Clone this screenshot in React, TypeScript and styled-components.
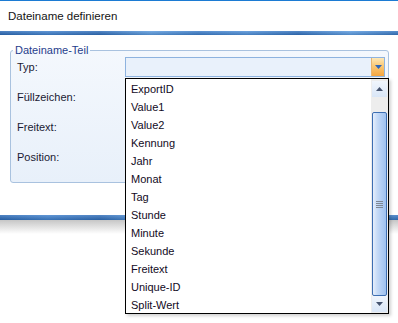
import * as React from 'react';
import styled, { createGlobalStyle } from 'styled-components';

const GlobalStyle = createGlobalStyle`
    html, body {
        margin: 0;
        padding: 0;
        background: #fff;
    }
    body {
        font-family: "Liberation Sans", Arial, sans-serif;
        font-size: 11px;
        color: #1a1a2e;
    }
`

const Window = styled.div`
    width: 398px;
    height: 323px;
    display: flex;
    flex-direction: column;
    background: #fff;
    overflow: hidden;
    border-top: 1px solid #1c7bd3;
    box-sizing: border-box;
`

const TitleBar = styled.div`
    height: 30px;
    flex-shrink: 0;
    display: flex;
    align-items: center;
    padding-left: 8px;
    font-size: 11.5px;
    color: #151515;
`

const Band = styled.div<{ $h: number }>`
    height: ${p => p.$h}px;
    flex-shrink: 0;
    background:
        linear-gradient(180deg, rgba(255, 255, 255, 0.18), rgba(0, 0, 0, 0.12)),
        linear-gradient(90deg, #2a69b6 0%, #3f80cc 12%, #2e6cb8 25%, #5a9ade 38%,
            #3a7bc8 50%, #4e8fd8 62%, #2f6fbc 75%, #5b9be0 88%, #3474c0 100%);
`

const Shadow = styled.div`
    height: 14px;
    flex-shrink: 0;
    background: linear-gradient(180deg, #c6c6c6, #ffffff);
`

const Body = styled.div`
    padding: 9px 9px 0 10px;
    flex-shrink: 0;
`

const Spacer = styled.div`
    height: 32px;
    flex-shrink: 0;
`

const GroupBox = styled.fieldset`
    margin: 0;
    padding: 0;
    border: 1px solid #a9c2df;
    border-radius: 3px;
    background: linear-gradient(180deg, #f4f8fd, #e8f0fa);
    min-width: 0;
`

const Caption = styled.legend`
    margin-left: 2px;
    padding: 0 2px;
    line-height: 13px;
    font-size: 11px;
    color: #1f3d8c;
`

const Grid = styled.div`
    display: grid;
    grid-template-columns: 108px 1fr;
    grid-auto-rows: 20px;
    row-gap: 10px;
    padding: 0 3px 15px 6px;
`

const Label = styled.div`
    display: flex;
    align-items: center;
    color: #1a1a33;
`

const ComboWrap = styled.div`
    position: relative;
`

const Combo = styled.div`
    height: 20px;
    box-sizing: border-box;
    border: 1px solid #8eb3df;
    background: #e9f1fb;
    display: flex;
    justify-content: flex-end;
`

const DropButton = styled.div`
    width: 12px;
    display: flex;
    align-items: center;
    justify-content: center;
    background: linear-gradient(180deg, #fde8b8 0%, #fac874 45%, #f4a540 100%);
    border-left: 1px solid #e7b56f;
`

const DropList = styled.div`
    position: absolute;
    top: 21px;
    left: 0;
    width: 264px;
    height: 236px;
    box-sizing: border-box;
    border: 1px solid #000;
    background: #fff;
    display: flex;
    box-shadow: 2px 2px 3px rgba(0, 0, 0, 0.18);
    z-index: 2;
`

const Items = styled.div`
    flex: 1;
    padding-top: 1px;
`

const Item = styled.div`
    height: 18px;
    line-height: 18px;
    padding-left: 5px;
    color: #120a24;
    white-space: nowrap;
`

const ScrollBar = styled.div`
    width: 17px;
    box-sizing: border-box;
    padding: 2px 1px 1px 1px;
    background: #ededed;
    display: flex;
    flex-direction: column;
`

const ScrollButton = styled.div`
    height: 16px;
    flex-shrink: 0;
    display: flex;
    align-items: center;
    justify-content: center;
    background: linear-gradient(180deg, #f0f5fc, #d9e6f7);
`

const Track = styled.div`
    flex: 1;
    display: flex;
    flex-direction: column;
    padding-top: 15px;
`

const Thumb = styled.div`
    flex: 1;
    border: 1px solid #3d6eb2;
    border-radius: 2px;
    background: linear-gradient(90deg, #e6effc 0%, #c8dcf7 30%, #b4cff4 60%, #9fc1ef 100%);
    display: flex;
    align-items: center;
    justify-content: center;
`

const Grip = styled.div`
    width: 7px;
    height: 7px;
    background: repeating-linear-gradient(180deg, #7f8894 0 1px, transparent 1px 2px);
`

const Arrow = ({ down, color }: { down?: boolean; color: string }) => (
    <svg width="7" height="4" viewBox="0 0 7 4">
        {down
            ? <polygon points="0,0 7,0 3.5,4" fill={color} />
            : <polygon points="0,4 7,4 3.5,0" fill={color} />}
    </svg>
);

const options = [
    'ExportID', 'Value1', 'Value2', 'Kennung', 'Jahr', 'Monat', 'Tag',
    'Stunde', 'Minute', 'Sekunde', 'Freitext', 'Unique-ID', 'Split-Wert'
];

const App = () => {
    return (
        <>
            <GlobalStyle />
            <Window>
                <TitleBar>Dateiname definieren</TitleBar>
                <Band $h={4} />
                <Body>
                    <GroupBox>
                        <Caption>Dateiname-Teil</Caption>
                        <Grid>
                            <Label>Typ:</Label>
                            <ComboWrap>
                                <Combo>
                                    <DropButton><Arrow down color="#2f66b8" /></DropButton>
                                </Combo>
                                <DropList>
                                    <Items>
                                        {options.map(o => <Item key={o}>{o}</Item>)}
                                    </Items>
                                    <ScrollBar>
                                        <ScrollButton><Arrow color="#45536f" /></ScrollButton>
                                        <Track>
                                            <Thumb><Grip /></Thumb>
                                        </Track>
                                        <ScrollButton><Arrow down color="#45536f" /></ScrollButton>
                                    </ScrollBar>
                                </DropList>
                            </ComboWrap>
                            <Label>Füllzeichen:</Label>
                            <div />
                            <Label>Freitext:</Label>
                            <div />
                            <Label>Position:</Label>
                            <div />
                        </Grid>
                    </GroupBox>
                </Body>
                <Spacer />
                <Band $h={5} />
                <Shadow />
            </Window>
        </>
    );
};

export default App;
